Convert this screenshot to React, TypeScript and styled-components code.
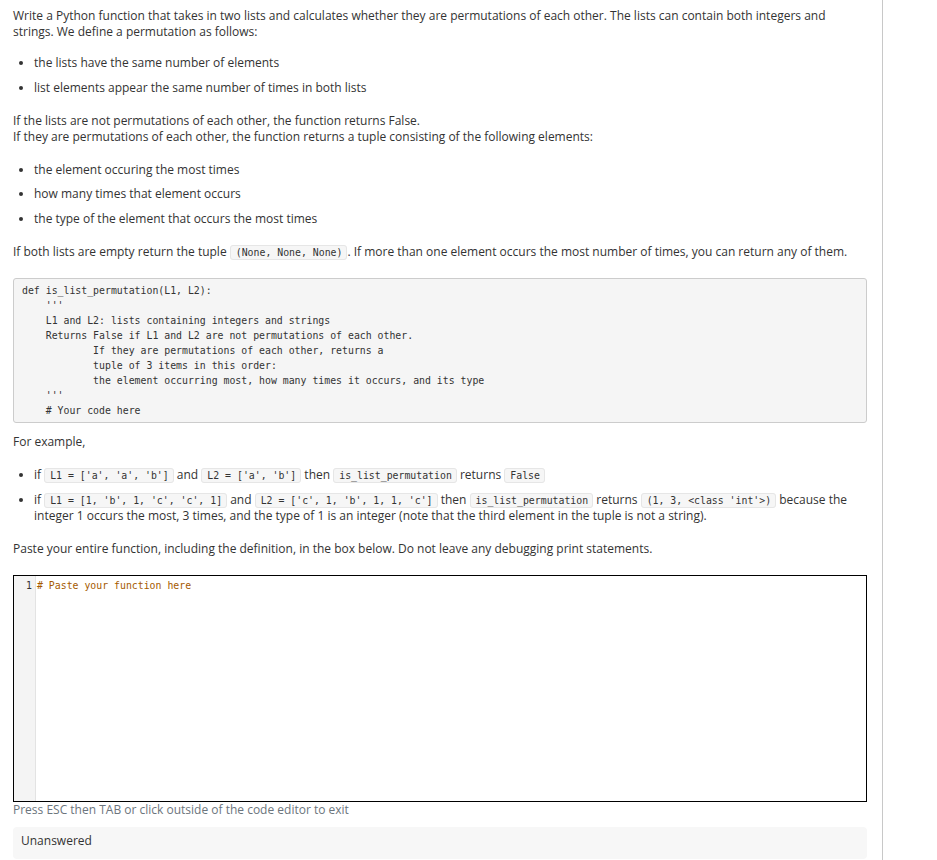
import React from "react";
import styled, { createGlobalStyle } from "styled-components";

const Global = createGlobalStyle`
  html, body { margin: 0; padding: 0; background: #fff; }
  body { font-family: "Open Sans", "Liberation Sans", sans-serif; color: #333; }
`;

const Page = styled.div`
  width: 883px;
  min-height: 860px;
  box-sizing: border-box;
  border-right: 1px solid #c8c8c8;
  padding: 8px 15px 0 13px;
  font-size: 12px;
  line-height: 16px;
`;

const P = styled.p<{ $mt?: number; $mb?: number }>`
  margin: ${(p) => p.$mt ?? 0}px 0 ${(p) => p.$mb ?? 0}px;
`;

const List = styled.ul<{ $mt?: number; $mb?: number; $gap?: number }>`
  margin: ${(p) => p.$mt ?? 0}px 0 ${(p) => p.$mb ?? 0}px;
  padding-left: 21px;
  li { margin-top: ${(p) => p.$gap ?? 8.5}px; }
  li:first-child { margin-top: 0; }
`;

const Code = styled.code`
  font-family: "DejaVu Sans Mono", "Liberation Mono", monospace;
  font-size: 9.85px;
  line-height: 12px;
  background: #f6f6f6;
  border: 1px solid #e6e6e6;
  border-radius: 3px;
  padding: 1px 4px 1px 5px;
  color: #333;
`;

const Pre = styled.pre`
  margin: 18px 0 11px;
  background: #f5f5f5;
  border: 1px solid #ccc;
  border-radius: 3px;
  padding: 4px 8px;
  font-family: "DejaVu Sans Mono", "Liberation Mono", monospace;
  font-size: 9.85px;
  line-height: 15px;
  color: #333;
  white-space: pre;
`;

const Editor = styled.div`
  margin-top: 18px;
  height: 227px;
  box-sizing: border-box;
  border: 1px solid #000;
  display: flex;
  font-family: "DejaVu Sans Mono", "Liberation Mono", monospace;
  font-size: 9.85px;
  line-height: 15px;
`;

const Gutter = styled.div`
  width: 22px;
  background: #f4f4f4;
  border-right: 1px solid #e3e3e3;
  color: #333;
  text-align: right;
  padding: 2px 3px 0 0;
  box-sizing: border-box;
`;

const EditorBody = styled.div`
  flex: 1;
  padding: 2px 0 0 1px;
  color: #a55a00;
`;

const Hint = styled.div`
  color: #6c757d;
  line-height: 16px;
`;

const Status = styled.div`
  margin-top: 9px;
  background: #f7f7f7;
  border-radius: 4px;
  padding: 6px 8px 10px;
  line-height: 16px;
`;

const codeText = `def is_list_permutation(L1, L2):
    '''
    L1 and L2: lists containing integers and strings
    Returns False if L1 and L2 are not permutations of each other.
            If they are permutations of each other, returns a
            tuple of 3 items in this order:
            the element occurring most, how many times it occurs, and its type
    '''
    # Your code here`;

export default function App() {
  return (
    <>
      <Global />
      <Page>
        <P>
          Write a Python function that takes in two lists and calculates whether they are permutations of each
          other. The lists can contain both integers and strings. We define a permutation as follows:
        </P>
        <List $mt={15}>
          <li>the lists have the same number of elements</li>
          <li>list elements appear the same number of times in both lists</li>
        </List>
        <P $mt={17}>
          If the lists are not permutations of each other, the function returns False.
          <br />
          If they are permutations of each other, the function returns a tuple consisting of the following elements:
        </P>
        <List $mt={17}>
          <li>the element occuring the most times</li>
          <li>how many times that element occurs</li>
          <li>the type of the element that occurs the most times</li>
        </List>
        <P $mt={17}>
          If both lists are empty return the tuple <Code>(None, None, None)</Code>. If more than one element occurs
          the most number of times, you can return any of them.
        </P>
        <Pre>{codeText}</Pre>
        <P>For example,</P>
        <List $mt={17} $gap={9}>
          <li>
            if <Code>L1 = ['a', 'a', 'b']</Code> and <Code>L2 = ['a', 'b']</Code> then{" "}
            <Code>is_list_permutation</Code> returns <Code>False</Code>
          </li>
          <li>
            if <Code>L1 = [1, 'b', 1, 'c', 'c', 1]</Code> and <Code>L2 = ['c', 1, 'b', 1, 1, 'c']</Code> then{" "}
            <Code>is_list_permutation</Code> returns <Code>(1, 3, &lt;class 'int'&gt;)</Code> because the integer 1
            occurs the most, 3 times, and the type of 1 is an integer (note that the third element in the tuple is
            not a string).
          </li>
        </List>
        <P $mt={17}>
          Paste your entire function, including the definition, in the box below. Do not leave any debugging print
          statements.
        </P>
        <Editor>
          <Gutter>1</Gutter>
          <EditorBody># Paste your function here</EditorBody>
        </Editor>
        <Hint>Press ESC then TAB or click outside of the code editor to exit</Hint>
        <Status>Unanswered</Status>
      </Page>
    </>
  );
}
